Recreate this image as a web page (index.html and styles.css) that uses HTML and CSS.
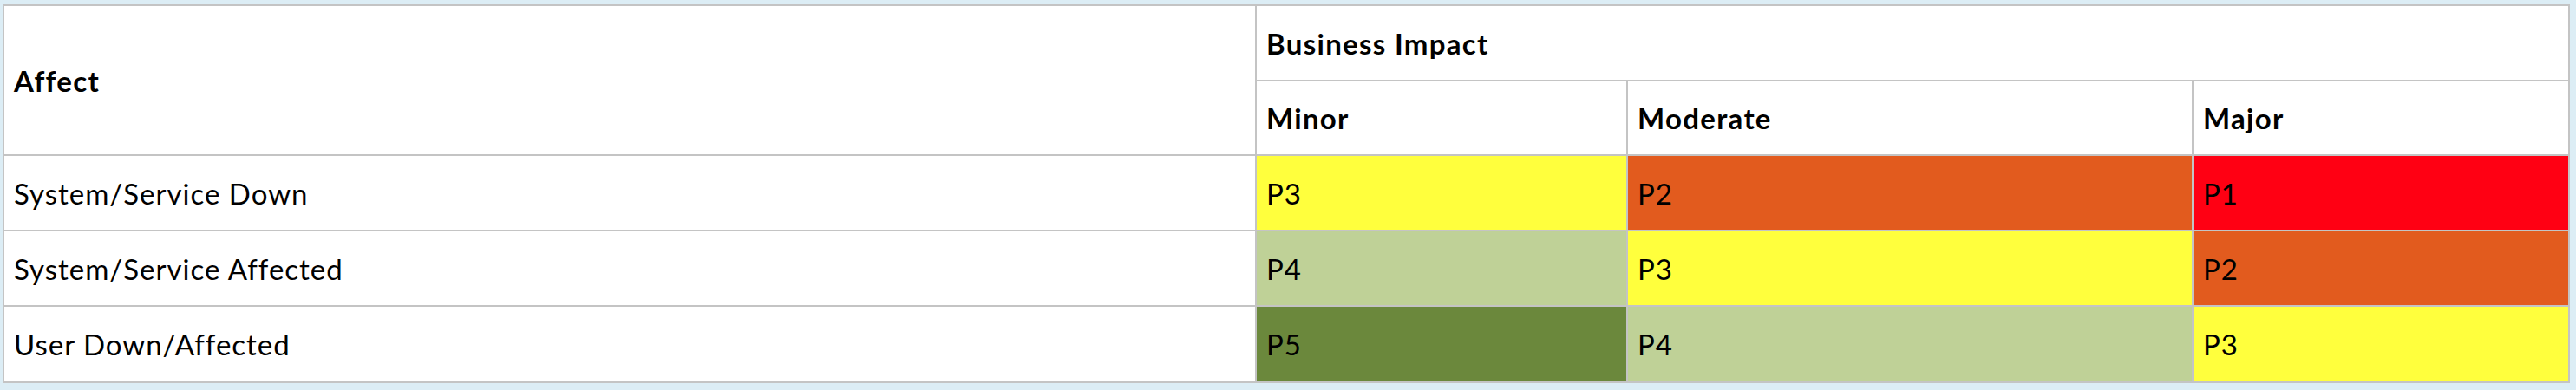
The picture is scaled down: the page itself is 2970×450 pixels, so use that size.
FILE: index.html
```html
<!DOCTYPE html>
<html lang="en">
<head>
<meta charset="utf-8">
<title>Priority Matrix</title>
<link rel="stylesheet" href="styles.css">
</head>
<body>
<table class="matrix">
  <colgroup>
    <col class="col-affect">
    <col class="col-minor">
    <col class="col-moderate">
    <col class="col-major">
  </colgroup>
  <thead>
    <tr class="row-h1">
      <th rowspan="2">Affect</th>
      <th colspan="3">Business Impact</th>
    </tr>
    <tr class="row-h2">
      <th>Minor</th>
      <th>Moderate</th>
      <th>Major</th>
    </tr>
  </thead>
  <tbody>
    <tr class="row-b1">
      <td>System/Service Down</td>
      <td class="p3">P3</td>
      <td class="p2">P2</td>
      <td class="p1">P1</td>
    </tr>
    <tr class="row-b2">
      <td>System/Service Affected</td>
      <td class="p4">P4</td>
      <td class="p3">P3</td>
      <td class="p2">P2</td>
    </tr>
    <tr class="row-b3">
      <td>User Down/Affected</td>
      <td class="p5">P5</td>
      <td class="p4">P4</td>
      <td class="p3">P3</td>
    </tr>
  </tbody>
</table>
</body>
</html>
```

FILE: styles.css
```css
html, body {
  margin: 0;
  background: #dcedf5;
}

body {
  padding: 5px 0 0 3px;
  font-family: "Lato", "Noto Sans", sans-serif;
  color: #000;
}

.matrix {
  width: 2960px;
  table-layout: fixed;
  border-collapse: separate;
  border-spacing: 0;
  border-top: 2px solid #c4c4c4;
  border-left: 2px solid #c4c4c4;
  background: #fff;
}

.col-affect { width: 1444px; }
.col-minor { width: 428px; }
.col-moderate { width: 652px; }
.col-major { width: 434px; }

.matrix th,
.matrix td {
  box-sizing: border-box;
  border-right: 2px solid #c4c4c4;
  border-bottom: 2px solid #c4c4c4;
  padding: 0 11px;
  text-align: left;
  vertical-align: middle;
  font-size: 33px;
  line-height: 40px;
  letter-spacing: 1px;
  white-space: nowrap;
}

.matrix th {
  font-weight: 700;
  letter-spacing: 1.3px;
}

.matrix td {
  font-weight: 400;
}

.row-h1 > * { height: 87px; }
.row-h2 > * { height: 86px; }
.row-b1 > * { height: 87px; }
.row-b2 > * { height: 87px; }
.row-b3 > * { height: 88px; }

.matrix th[rowspan] { height: 173px; }

.p1 { background: #ff0013; }
.p2 { background: #e25b1e; }
.p3 { background: #ffff3d; }
.p4 { background: #bfd197; }
.p5 { background: #6b883c; }
```
